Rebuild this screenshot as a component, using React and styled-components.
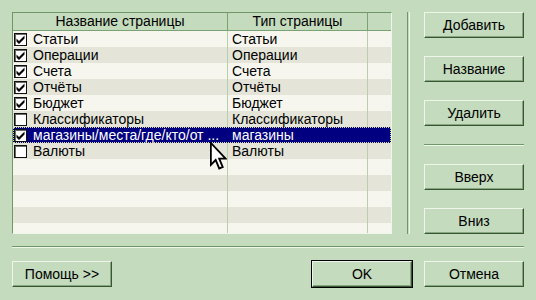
import React from 'react'
import styled, { createGlobalStyle } from 'styled-components'

const Global = createGlobalStyle`
    body {
        margin: 0;
        background: #c4dbbd;
        font-family: "Liberation Sans", Arial, sans-serif;
        font-size: 14px;
    }
`

const Dialog = styled.div`
    position: relative;
    width: 536px;
    height: 300px;
    box-sizing: border-box;
    padding: 12px;
    background: #c4dbbd;
    display: flex;
    flex-direction: column;
`

const Top = styled.div`
    display: flex;
    height: 222px;
`

const List = styled.div`
    width: 380px;
    height: 222px;
    box-sizing: border-box;
    border-top: 1px solid #6f9868;
    border-left: 1px solid #6f9868;
    border-right: 1px solid #eef6ea;
    border-bottom: 1px solid #eef6ea;
    overflow: hidden;
    background: #f6f6ee;
`

const Row = styled.div`
    display: grid;
    grid-template-columns: 215px 140px 1fr;
    height: 16px;
    line-height: 16px;
    background: ${p => (p.$selected ? '#000080' : p.$odd ? '#e4e5d8' : '#f6f6ee')};
    color: ${p => (p.$selected ? '#fff' : '#000')};
    outline: ${p => (p.$selected ? '1px dotted #d8d8a0' : 'none')};
    outline-offset: -1px;
    white-space: nowrap;
`

const Header = styled.div`
    display: grid;
    grid-template-columns: 215px 140px 1fr;
    height: 18px;
    line-height: 17px;
    background: #c4dbbd;
    border-bottom: 1px solid #7aa272;
    box-sizing: border-box;
`

const HeadCell = styled.div`
    text-align: center;
    border-right: ${p => (p.$last ? 'none' : '1px solid #7aa272')};
`

const Cell = styled.div`
    display: flex;
    align-items: center;
    gap: 6px;
    padding-left: ${p => (p.$first ? '1px' : '4px')};
    overflow: hidden;
    border-right: ${p => (p.$last ? 'none' : p.$selected ? '1px solid #000080' : '1px solid #b6d0ae')};
`

const Check = styled.span`
    flex: none;
    width: 13px;
    height: 13px;
    box-sizing: border-box;
    border: 1px solid #111;
    box-shadow: inset 1px 1px 0 #6a6a6a;
    background: #fff;
    display: flex;
    align-items: center;
    justify-content: center;
`

const VLine = styled.div`
    width: 1px;
    margin: 0 14px 0 15px;
    border-left: 1px solid #6f9868;
    border-right: 1px solid #eef6ea;
`

const Side = styled.div`
    width: 100px;
    display: flex;
    flex-direction: column;
    gap: 18px;
`

const HLine = styled.div`
    height: 0;
    border-top: 1px solid #6f9868;
    border-bottom: 1px solid #eef6ea;
    margin: ${p => p.$margin || '0'};
`

const Button = styled.button`
    width: 100px;
    height: 26px;
    box-sizing: border-box;
    padding: 0;
    font-family: "Liberation Sans", Arial, sans-serif;
    font-size: 14px;
    color: #000;
    background: #c4dbbd;
    border: 1px solid;
    border-color: #eef6ea #3a5534 #3a5534 #eef6ea;
    box-shadow: ${p => (p.$default
        ? '0 0 0 1px #000, inset -1px -1px 0 #86a87e'
        : 'inset -1px -1px 0 #86a87e')};
`

const Bottom = styled.div`
    display: flex;
    align-items: center;
    gap: 12px;
`

const Spacer = styled.div`
    flex: 1;
`

const Cursor = styled.svg`
    position: absolute;
    left: 210px;
    top: 142px;
`

const pages = [
    ['Статьи', 'Статьи', true],
    ['Операции', 'Операции', true],
    ['Счета', 'Счета', true],
    ['Отчёты', 'Отчёты', true],
    ['Бюджет', 'Бюджет', true],
    ['Классификаторы', 'Классификаторы', false],
    ['магазины/места/где/кто/от ...', 'магазины', true],
    ['Валюты', 'Валюты', false],
    null, null, null, null, null, null,
]

function Tick() {
    return (
        <svg width="9" height="9" viewBox="0 0 9 9">
            <path d="M0.5 3.5 L3 6 L8.5 0.5 L8.5 3.5 L3 9 L0.5 6.5 Z" fill="#000" />
        </svg>
    )
}

export default function App() {
    return (
        <Dialog>
            <Global />
            <Top>
                <List>
                    <Header>
                        <HeadCell>Название страницы</HeadCell>
                        <HeadCell>Тип страницы</HeadCell>
                        <HeadCell $last />
                    </Header>
                    {pages.map((p, i) => {
                        const selected = i === 6
                        return (
                            <Row key={i} $odd={i % 2 === 1} $selected={selected}>
                                <Cell $first $selected={selected}>
                                    {p && <Check>{p[2] && <Tick />}</Check>}
                                    {p && p[0]}
                                </Cell>
                                <Cell $selected={selected}>{p && p[1]}</Cell>
                                <Cell $last />
                            </Row>
                        )
                    })}
                </List>
                <VLine />
                <Side>
                    <Button>Добавить</Button>
                    <Button>Название</Button>
                    <Button>Удалить</Button>
                    <HLine />
                    <Button>Вверх</Button>
                    <Button>Вниз</Button>
                </Side>
            </Top>
            <HLine $margin="12px 0 13px" />
            <Bottom>
                <Button>Помощь &gt;&gt;</Button>
                <Spacer />
                <Button $default>OK</Button>
                <Button>Отмена</Button>
            </Bottom>
            <Cursor width="17" height="30" viewBox="0 0 12 21">
                <path d="M0.6 0.6 L0.6 16 L4 12.6 L6.5 18.6 L9 17.6 L6.5 11.6 L11 11.6 Z"
                    fill="#fff" stroke="#000" strokeWidth="1.3" strokeLinejoin="miter" />
            </Cursor>
        </Dialog>
    )
}
